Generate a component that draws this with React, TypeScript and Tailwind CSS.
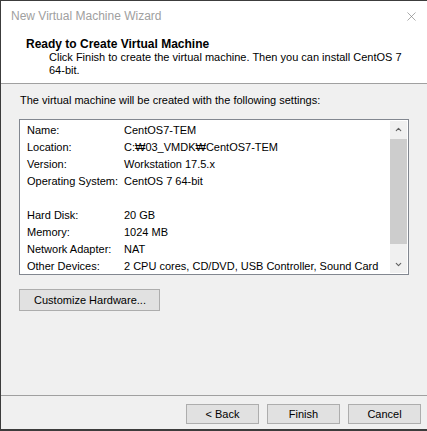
import { X, ChevronUp, ChevronDown } from 'lucide-react'

const settings: [string, string][] = [
  ['Name:', 'CentOS7-TEM'],
  ['Location:', 'C:₩03_VMDK₩CentOS7-TEM'],
  ['Version:', 'Workstation 17.5.x'],
  ['Operating System:', 'CentOS 7 64-bit'],
  ['', ''],
  ['Hard Disk:', '20 GB'],
  ['Memory:', '1024 MB'],
  ['Network Adapter:', 'NAT'],
  ['Other Devices:', '2 CPU cores, CD/DVD, USB Controller, Sound Card'],
]

function WinButton({ children, className }: { children: React.ReactNode; className?: string }) {
  return (
    <button
      className={`flex items-center justify-center border border-[#adadad] bg-[#e1e1e1] text-[11px] text-black ${className ?? ''}`}
    >
      {children}
    </button>
  )
}

export default function App() {
  return (
    <div
      className="flex h-[431px] w-[427px] flex-col border-t border-b-2 border-l border-[#3c3c3c] bg-[#f0f0f0] text-[11px] leading-[17px] text-black"
      style={{ fontFamily: '"Liberation Sans", "Noto Sans CJK KR", sans-serif' }}
    >
      {/* title bar */}
      <div className="flex h-[30px] items-center justify-between bg-white pl-[10px] pr-[8px]">
        <span className="text-[12px] text-[#a0a0a0]">New Virtual Machine Wizard</span>
        <X size={15} strokeWidth={1} className="text-[#777]" />
      </div>

      {/* header */}
      <div className="h-[53px] border-b border-[#a0a0a0] bg-white pl-[25px] pt-[6px]">
        <div className="text-[12px] font-bold leading-[14px]">Ready to Create Virtual Machine</div>
        <div className="pl-[23px] pr-[20px] leading-[13px]">
          Click Finish to create the virtual machine. Then you can install CentOS 7 64-bit.
        </div>
      </div>

      {/* body */}
      <div className="flex flex-1 flex-col px-[18px] pt-[8px]">
        <div className="pl-[1px]">The virtual machine will be created with the following settings:</div>

        <div className="mt-[10px] flex h-[156px] border border-[#828790] bg-white">
          <div className="flex-1 pl-[7px] pt-[2px]">
            {settings.map(([k, v], i) => (
              <div key={i} className="flex h-[17px] items-center whitespace-nowrap">
                <span className="w-[97px] shrink-0">{k}</span>
                <span>{v}</span>
              </div>
            ))}
          </div>
          <div className="flex w-[17px] flex-col bg-[#f0f0f0] my-[1px] mr-[1px]">
            <div className="flex h-[17px] items-center justify-center">
              <ChevronUp size={9} strokeWidth={3} className="text-[#606060]" />
            </div>
            <div className="mt-[1px] h-[105px] bg-[#cdcdcd]" />
            <div className="flex-1" />
            <div className="flex h-[17px] items-center justify-center">
              <ChevronDown size={9} strokeWidth={3} className="text-[#606060]" />
            </div>
          </div>
        </div>

        <WinButton className="mt-[14px] h-[22px] w-[141px] self-start pl-[1px]">Customize Hardware...</WinButton>
      </div>

      {/* footer */}
      <div className="flex h-[34px] items-start justify-end gap-[8px] border-t border-[#a0a0a0] pr-[6px] pt-[8px]">
        <WinButton className="h-[20px] w-[73px]">&lt; Back</WinButton>
        <WinButton className="h-[20px] w-[73px]">Finish</WinButton>
        <WinButton className="h-[20px] w-[73px]">Cancel</WinButton>
      </div>
    </div>
  )
}
